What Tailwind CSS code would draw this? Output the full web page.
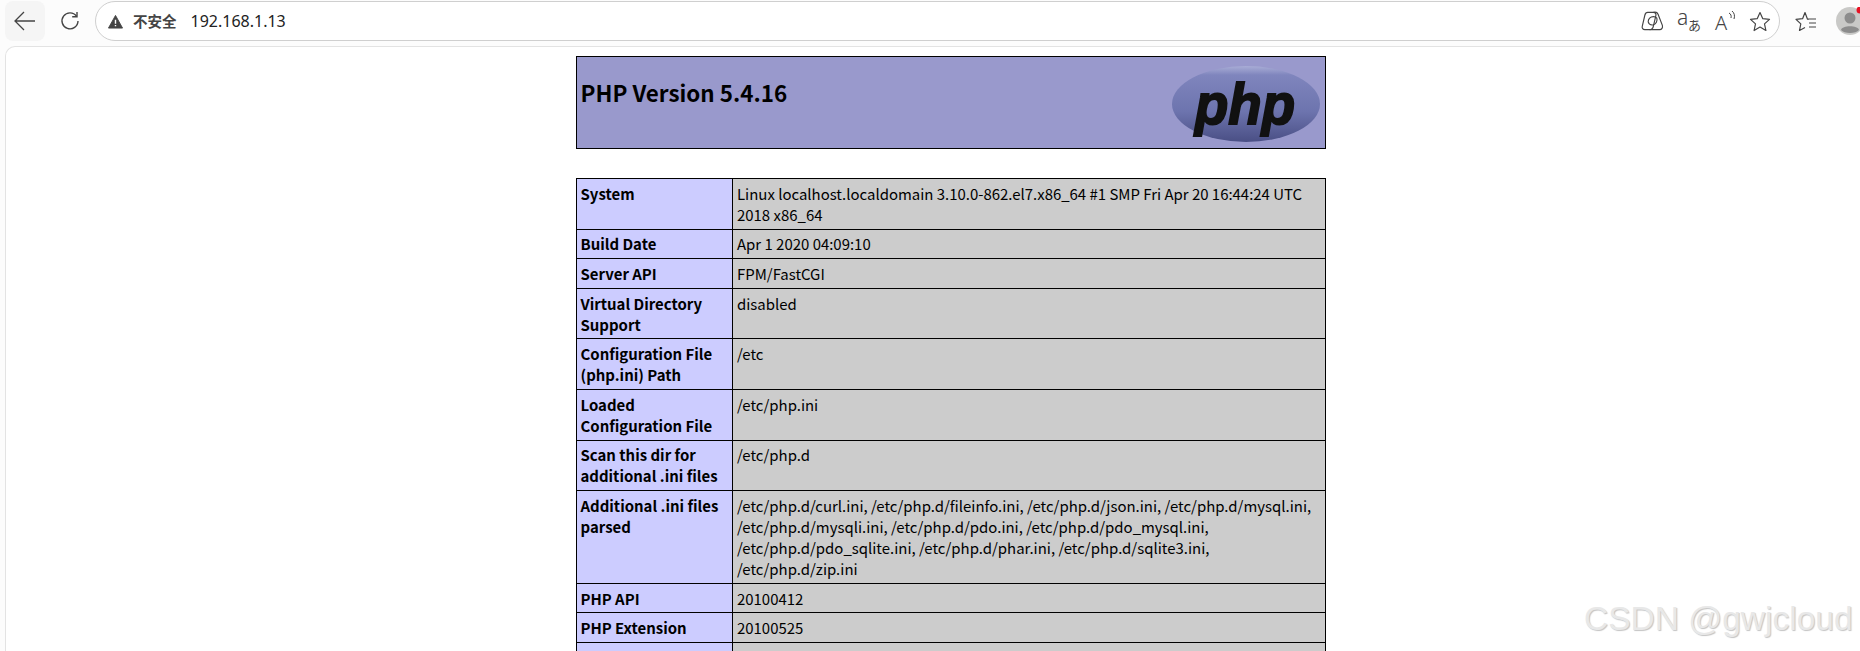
<!DOCTYPE html>
<html lang="zh">
<head>
    <meta charset="UTF-8">
    <title>phpinfo()</title>
    <script src="https://cdn.jsdelivr.net/npm/@tailwindcss/browser@4"></script>
</head>
<body class="w-[1860px] h-[651px] overflow-hidden bg-[#fcfcfc] relative font-['Noto_Sans_CJK_SC','Noto_Sans',sans-serif] text-black">
    <!-- browser toolbar -->
    <div class="h-[46px] flex items-start pt-[1px]">
        <div class="ml-[5px] w-[40px] h-[40px] rounded-[8px] bg-[#f5f5f5] flex items-center justify-center">
            <svg width="22" height="20" viewBox="0 0 22 20" fill="none" stroke="#444" stroke-width="1.3"><path d="M1 10H21M10 1L1 10L10 19"/></svg>
        </div>
        <div class="w-[50px] h-[40px] flex items-center justify-center">
            <svg width="20" height="20" viewBox="0 0 20 20" fill="none" stroke="#444" stroke-width="1.4"><path d="M16.500 5.200A8 8 0 1 0 18 10"/><path d="M17 1V5.800H12.200"/></svg>
        </div>
        <div class="w-[1685px] h-[40px] rounded-full border border-[#cfcfcf] bg-white flex items-center">
            <svg class="ml-[12px]" width="15" height="15" viewBox="0 0 16 15"><path d="M8 1L15.500 14.500H.5Z" fill="#444" stroke="#444" stroke-linejoin="round"/><path d="M8 5.500V10M8 11.200V12.600" stroke="#fff" stroke-width="1.500"/></svg>
            <span class="ml-[10px] text-[14.500px] leading-none font-bold text-[#444]">不安全</span>
            <span class="ml-[14px] text-[16px] leading-none text-[#222] font-['Noto_Sans',sans-serif]">192.168.1.13</span>
            <div class="ml-auto flex items-center">
                <svg width="23" height="22" viewBox="0 0 24 22" fill="none" stroke="#444" stroke-width="1.200"><path d="M7 2H13C15 2 16 3.500 15.500 5.500L13 16C12.500 18.500 11 20 9 20H4C2 20 .8 18.500 1.300 16.500L4 5C4.500 3 5.500 2 7 2Z"/><path d="M13 2C15 1.500 17 2 17.800 4L22.300 15.500C23 18 21.500 20 19.500 20H9"/><path d="M9 8C11 6 15 6 16.500 8C17.500 11 15.500 14 13 15C10 15.500 8 14 7.500 12C7.500 10 8 9 9 8Z"/></svg>
                <div class="ml-[13px] w-[24px] h-[22px] relative text-[#444] leading-none">
                    <span class="absolute left-0 top-[-3px] text-[21px] font-['Noto_Sans',sans-serif] font-light">a</span>
                    <span class="absolute left-[11px] top-[8px] text-[13px]">あ</span>
                </div>
                <div class="ml-[14px] w-[24px] h-[22px] relative text-[#444] leading-none">
                    <span class="absolute left-0 top-[3px] text-[20px] font-['Noto_Sans',sans-serif] font-light">A</span>
                    <svg class="absolute left-[13px] top-0" width="10" height="12" viewBox="0 0 10 12" fill="none" stroke="#444"><path d="M1 3C3 4 3.500 6 3 8M4 1C6.500 3 7 6 6 9"/></svg>
                </div>
                <svg class="ml-[10px] mr-[8px]" width="22" height="21" viewBox="0 0 22 21" fill="none" stroke="#444" stroke-width="1.200" stroke-linejoin="round"><path d="M11 1.500L13.800 7.700L20.500 8.400L15.500 12.900L16.900 19.500L11 16.100L5.100 19.500L6.500 12.900L1.500 8.400L8.200 7.700Z"/></svg>
            </div>
        </div>
        <div class="ml-[15px] h-[40px] flex items-center">
            <svg width="22" height="21" viewBox="0 0 22 21" fill="none" stroke="#444" stroke-width="1.200" stroke-linejoin="round"><path d="M14 8.200H12.500L10 1.500L7.600 7.700L1 8.400L5.800 12.900L4.500 19.500L10 16.500"/><path d="M14 8H21M14 12H21M14 16H21"/></svg>
        </div>
    </div>

    <!-- page -->
    <div class="ml-[5px] h-[605px] bg-white rounded-tl-[10px] border-t border-l border-[#e3e3e3] overflow-hidden">
        <div class="w-[750px] ml-[570px] mt-[9px]">
            <div class="h-[93px] border border-black bg-[#9999cc] flex justify-between pl-[3.500px] pr-[4px] pt-[19px]">
                <h1 class="text-[22.400px] leading-[32px] font-bold">PHP Version 5.4.16</h1>
                <svg class="mt-[-11px]" width="150" height="78" viewBox="0 0 150 78">
                    <defs>
                        <linearGradient id="oval" x1="0" y1="0" x2="0" y2="1">
                            <stop offset="0" stop-color="#a9add6"/>
                            <stop offset=".12" stop-color="#7f85bd"/>
                            <stop offset=".6" stop-color="#6d74ae"/>
                            <stop offset="1" stop-color="#4a4f85"/>
                        </linearGradient>
                    </defs>
                    <ellipse cx="75" cy="39" rx="74" ry="38" fill="url(#oval)"/>
                    <text x="24" y="59" textLength="100" lengthAdjust="spacingAndGlyphs" font-family="'Liberation Sans',sans-serif" font-size="58" font-weight="700" font-style="italic" fill="#111" stroke="#111" stroke-width="2">php</text>
                </svg>
            </div>
            <table class="mt-[29px] w-[750px] table-fixed border-collapse text-[14.950px] leading-[21px]">
                <colgroup><col class="w-[156px]"><col></colgroup>
                <tbody>
                    <tr>
                        <td class="border border-black bg-[#ccccff] font-bold pl-[3.500px] pr-[4px] py-[3.800px] align-top">System</td>
                        <td class="border border-black bg-[#cccccc] px-[4px] py-[3.800px] align-top">Linux localhost.localdomain 3.10.0-862.el7.x86_64 #1 SMP Fri Apr 20 16:44:24 UTC 2018 x86_64</td>
                    </tr>
                    <tr>
                        <td class="border border-black bg-[#ccccff] font-bold pl-[3.500px] pr-[4px] py-[3.800px] align-top">Build Date</td>
                        <td class="border border-black bg-[#cccccc] px-[4px] py-[3.800px] align-top">Apr 1 2020 04:09:10</td>
                    </tr>
                    <tr>
                        <td class="border border-black bg-[#ccccff] font-bold pl-[3.500px] pr-[4px] py-[3.800px] align-top">Server API</td>
                        <td class="border border-black bg-[#cccccc] px-[4px] py-[3.800px] align-top">FPM/FastCGI</td>
                    </tr>
                    <tr>
                        <td class="border border-black bg-[#ccccff] font-bold pl-[3.500px] pr-[4px] py-[3.800px] align-top">Virtual Directory Support</td>
                        <td class="border border-black bg-[#cccccc] px-[4px] py-[3.800px] align-top">disabled</td>
                    </tr>
                    <tr>
                        <td class="border border-black bg-[#ccccff] font-bold pl-[3.500px] pr-[4px] py-[3.800px] align-top">Configuration File (php.ini) Path</td>
                        <td class="border border-black bg-[#cccccc] px-[4px] py-[3.800px] align-top">/etc</td>
                    </tr>
                    <tr>
                        <td class="border border-black bg-[#ccccff] font-bold pl-[3.500px] pr-[4px] py-[3.800px] align-top">Loaded Configuration File</td>
                        <td class="border border-black bg-[#cccccc] px-[4px] py-[3.800px] align-top">/etc/php.ini</td>
                    </tr>
                    <tr>
                        <td class="border border-black bg-[#ccccff] font-bold pl-[3.500px] pr-[4px] py-[3.800px] align-top">Scan this dir for additional .ini files</td>
                        <td class="border border-black bg-[#cccccc] px-[4px] py-[3.800px] align-top">/etc/php.d</td>
                    </tr>
                    <tr>
                        <td class="border border-black bg-[#ccccff] font-bold pl-[3.500px] pr-[4px] py-[3.800px] align-top">Additional .ini files parsed</td>
                        <td class="border border-black bg-[#cccccc] px-[4px] py-[3.800px] align-top">/etc/php.d/curl.ini, /etc/php.d/fileinfo.ini, /etc/php.d/json.ini, /etc/php.d/mysql.ini, /etc/php.d/mysqli.ini, /etc/php.d/pdo.ini, /etc/php.d/pdo_mysql.ini, /etc/php.d/pdo_sqlite.ini, /etc/php.d/phar.ini, /etc/php.d/sqlite3.ini, /etc/php.d/zip.ini</td>
                    </tr>
                    <tr>
                        <td class="border border-black bg-[#ccccff] font-bold pl-[3.500px] pr-[4px] py-[3.800px] align-top">PHP API</td>
                        <td class="border border-black bg-[#cccccc] px-[4px] py-[3.800px] align-top">20100412</td>
                    </tr>
                    <tr>
                        <td class="border border-black bg-[#ccccff] font-bold pl-[3.500px] pr-[4px] py-[3.800px] align-top">PHP Extension</td>
                        <td class="border border-black bg-[#cccccc] px-[4px] py-[3.800px] align-top">20100525</td>
                    </tr>
                    <tr>
                        <td class="border border-black bg-[#ccccff] font-bold pl-[3.500px] pr-[4px] py-[3.800px] align-top">&nbsp;</td>
                        <td class="border border-black bg-[#cccccc] px-[4px] py-[3.800px] align-top">&nbsp;</td>
                    </tr>
                </tbody>
            </table>
        </div>
    </div>

    <!-- avatar and watermark sit over the page -->
    <svg class="absolute left-[1836px] top-[7px]" width="24" height="28" viewBox="0 0 24 28">
        <circle cx="14" cy="14" r="14" fill="#c9c9c7"/>
        <circle cx="14" cy="11" r="5.500" fill="#8c8c8c"/>
        <path d="M5 23C6 18 22 18 23 23C20 27 8 27 5 23Z" fill="#8c8c8c"/>
        <circle cx="24" cy="3" r="3.500" fill="#e81123"/>
    </svg>
    <div class="absolute left-[1584px] top-[601px] text-[33.500px] leading-[36px] whitespace-nowrap text-[#e8e8e8] font-['Liberation_Sans',sans-serif] [text-shadow:1px_1px_1px_#c4c4c4]">CSDN @gwjcloud</div>
</body>
</html>
